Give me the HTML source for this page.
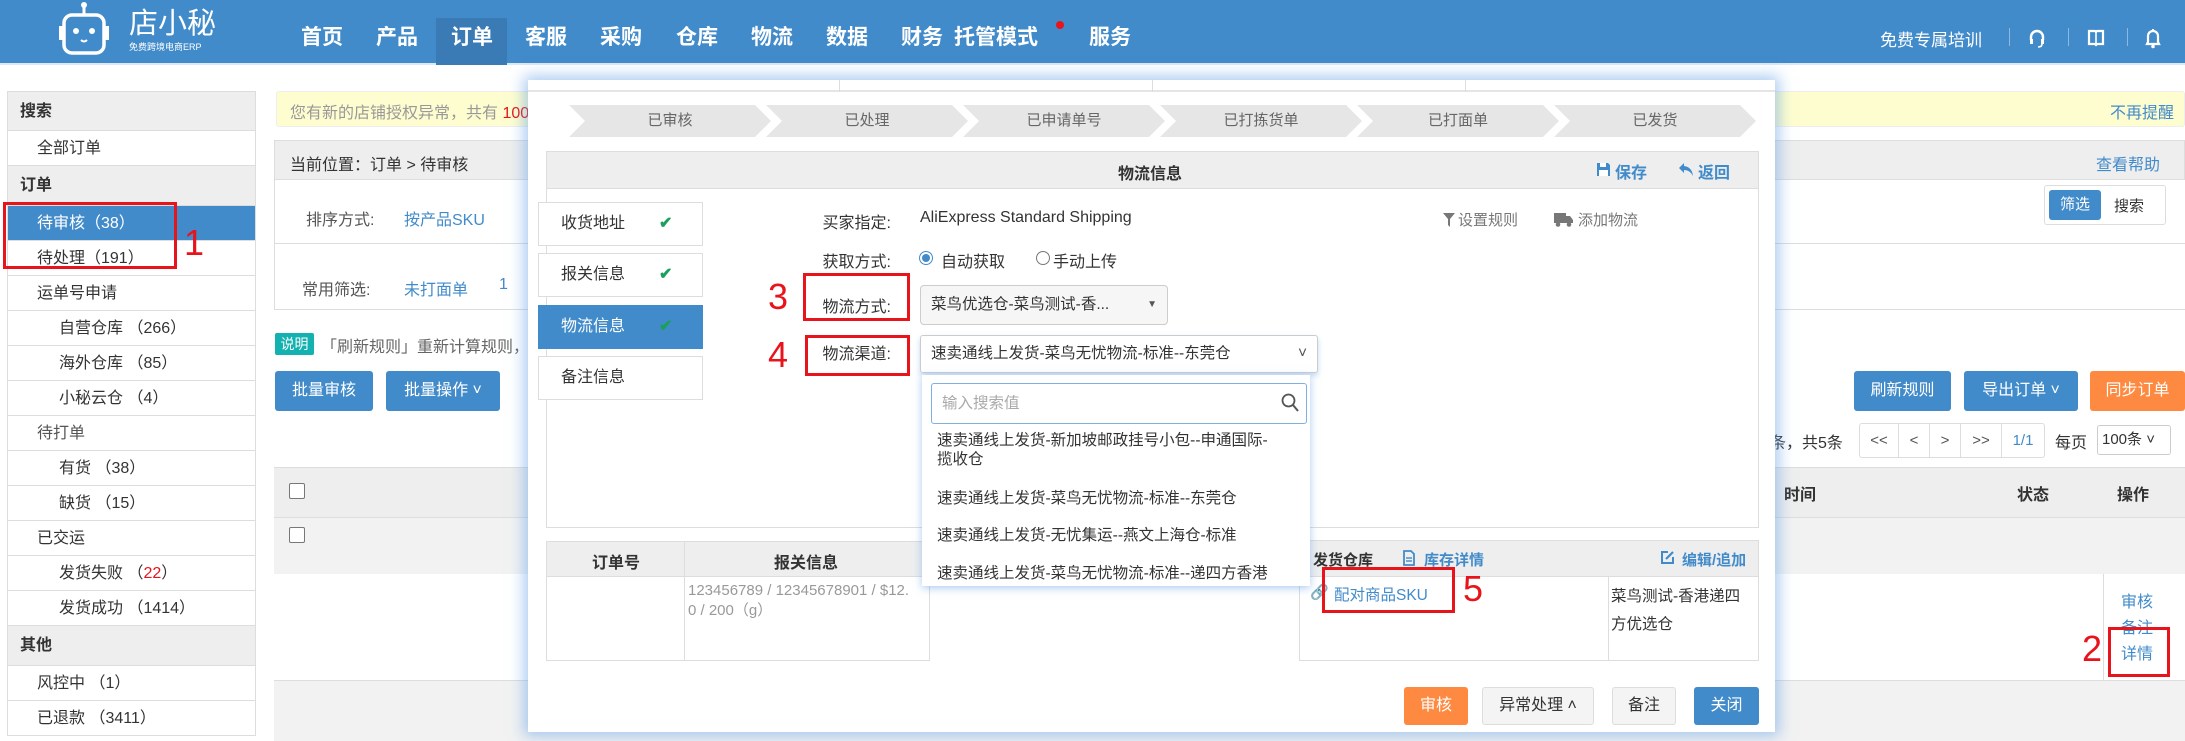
<!DOCTYPE html>
<html><head><meta charset="utf-8">
<style>
*{margin:0;padding:0;box-sizing:border-box}
body{width:2185px;height:741px;overflow:hidden;position:relative;background:#fff;font-family:"Liberation Sans","Noto Sans CJK SC",sans-serif;font-size:16px;color:#333}
.a{position:absolute}
.hdr{left:0;top:0;width:2185px;height:65px;background:#428bca;border-bottom:2px solid #dbe8f5}
.nav{top:0;height:65px;line-height:76px;color:#fff;font-weight:bold;font-size:21px}
.sb{left:7px;width:249px;border-left:1px solid #ddd;border-right:1px solid #ddd;border-bottom:1px solid #ddd;height:35px;line-height:35px;font-size:16px;color:#333;background:#fff}
.sbh{background:#eee;height:40px;line-height:40px;font-weight:bold}
.red{border:3px solid #e8141b}
.rn{color:#e8141b;font-size:36px;font-family:"Liberation Sans",sans-serif}
.btn{color:#fff;background:#428bca;border-radius:3px;text-align:center;font-size:16px}
.blue{color:#428bca}
.step{top:105px;height:32px;line-height:32px;background:#e6e6e6;color:#666;text-align:center;font-size:15px;clip-path:polygon(0 0,calc(100% - 16px) 0,100% 50%,calc(100% - 16px) 100%,0 100%,16px 50%)}
.tab{left:538px;width:165px;border:1px solid #ddd;background:#fff;height:44px;line-height:42px;padding-left:22px;font-size:16px}
.chk{color:#1aa05a;font-weight:bold;position:absolute;left:120px}
.lbl{width:110px;text-align:right;left:781px;color:#333;font-size:16px}
.gbtn{background:#f4f4f4;border:1px solid #ddd;border-radius:3px;text-align:center;line-height:36px;font-size:16px}
.dd{left:937px;font-size:15.5px;color:#333}
</style></head><body>

<!-- header -->
<div class="a hdr"></div>
<svg class="a" style="left:56px;top:2px" width="56" height="56" viewBox="0 0 56 56"><line x1="28" y1="2" x2="28" y2="12" stroke="#fff" stroke-width="3"/><circle cx="28" cy="3" r="3" fill="#fff"/><rect x="8" y="13" width="40" height="38" rx="8" fill="none" stroke="#fff" stroke-width="3.5"/><rect x="3" y="24" width="4" height="14" fill="#fff"/><rect x="49" y="24" width="4" height="14" fill="#fff"/><circle cx="20" cy="29" r="3" fill="#fff"/><circle cx="36" cy="29" r="3" fill="#fff"/><path d="M25 38 q3 3 6 0" stroke="#fff" fill="none" stroke-width="2"/></svg>
<div class="a" style="left:129px;top:8px;color:#fff;font-size:29px;line-height:32px">店小秘</div>
<div class="a" style="left:129px;top:42px;color:#fff;font-size:9px;line-height:10px">免费跨境电商ERP</div>
<div class="a" style="left:436px;top:18px;width:71px;height:47px;background:#3a7ab5"></div>
<div class="a nav" style="left:301px">首页</div>
<div class="a nav" style="left:376px">产品</div>
<div class="a nav" style="left:451px">订单</div>
<div class="a nav" style="left:525px">客服</div>
<div class="a nav" style="left:600px">采购</div>
<div class="a nav" style="left:676px">仓库</div>
<div class="a nav" style="left:751px">物流</div>
<div class="a nav" style="left:826px">数据</div>
<div class="a nav" style="left:901px">财务</div>
<div class="a nav" style="left:954px">托管模式</div>
<div class="a" style="left:1056px;top:21px;width:8px;height:8px;border-radius:50%;background:#e8141b"></div>
<div class="a nav" style="left:1089px">服务</div>
<div class="a" style="left:1880px;top:26px;color:#fff;font-size:17px">免费专属培训</div>
<div class="a" style="left:2009px;top:28px;width:1px;height:18px;background:#8db8e0"></div>
<div class="a" style="left:2068px;top:28px;width:1px;height:18px;background:#8db8e0"></div>
<div class="a" style="left:2127px;top:28px;width:1px;height:18px;background:#8db8e0"></div>
<svg class="a" style="left:2028px;top:28px" width="18" height="20" viewBox="0 0 18 20"><path d="M3 12 V9 a6 6 0 0 1 12 0 V12" fill="none" stroke="#fff" stroke-width="2.4"/><rect x="2" y="11" width="3" height="5" fill="#fff"/><rect x="13" y="11" width="3" height="5" fill="#fff"/><path d="M14 16 q0 3 -4 3" stroke="#fff" fill="none" stroke-width="1.6"/></svg>
<svg class="a" style="left:2087px;top:29px" width="18" height="18" viewBox="0 0 18 18"><path d="M2 2 H8 L9 3 L10 2 H16 V15 H10 L9 16 L8 15 H2 Z" fill="none" stroke="#fff" stroke-width="2.2"/><line x1="9" y1="3" x2="9" y2="15" stroke="#fff" stroke-width="1.6"/></svg>
<svg class="a" style="left:2145px;top:27px" width="16" height="22" viewBox="0 0 16 22"><path d="M3 15 V9 a5 5 0 0 1 10 0 V15 L14 17 H2 Z" fill="none" stroke="#fff" stroke-width="2.2"/><circle cx="8" cy="19.5" r="1.8" fill="#fff"/><rect x="7" y="2" width="2" height="3" fill="#fff"/></svg>

<!-- sidebar -->
<div class="a sb sbh" style="top:91px;padding-left:12px;border-top:1px solid #ddd">搜索</div>
<div class="a sb" style="top:131px;padding-left:29px">全部订单</div>
<div class="a sb sbh" style="top:166px;padding-left:12px">订单</div>
<div class="a sb" style="top:206px;padding-left:29px;background:#428bca;color:#fff">待审核（38）</div>
<div class="a sb" style="top:241px;padding-left:29px">待处理（191）</div>
<div class="a sb" style="top:276px;padding-left:29px">运单号申请</div>
<div class="a sb" style="top:311px;padding-left:51px">自营仓库 （266）</div>
<div class="a sb" style="top:346px;padding-left:51px">海外仓库 （85）</div>
<div class="a sb" style="top:381px;padding-left:51px">小秘云仓 （4）</div>
<div class="a sb" style="top:416px;padding-left:29px;color:#555">待打单</div>
<div class="a sb" style="top:451px;padding-left:51px">有货 （38）</div>
<div class="a sb" style="top:486px;padding-left:51px">缺货 （15）</div>
<div class="a sb" style="top:521px;padding-left:29px">已交运</div>
<div class="a sb" style="top:556px;padding-left:51px">发货失败 （<span style="color:#e8141b">22</span>）</div>
<div class="a sb" style="top:591px;padding-left:51px">发货成功 （1414）</div>
<div class="a sb sbh" style="top:626px;padding-left:12px">其他</div>
<div class="a sb" style="top:666px;padding-left:29px">风控中 （1）</div>
<div class="a sb" style="top:701px;padding-left:29px">已退款 （3411）</div>
<div class="a red" style="left:3px;top:202px;width:174px;height:67px"></div>
<div class="a rn" style="left:184px;top:222px">1</div>

<!-- main content -->
<div class="a" style="left:276px;top:91px;width:1909px;height:36px;background:#fefdd0;border:1px solid #eee;border-radius:3px"></div>
<div class="a" style="left:290px;top:99px;color:#999;font-size:16px">您有新的店铺授权异常，共有 <span style="color:#e8141b">100</span></div>
<div class="a blue" style="left:2110px;top:99px;font-size:16px">不再提醒</div>
<div class="a" style="left:274px;top:140px;width:1911px;height:40px;background:#eee;border:1px solid #ddd"></div>
<div class="a" style="left:290px;top:151px">当前位置：订单 &gt; 待审核</div>
<div class="a blue" style="left:2096px;top:151px">查看帮助</div>
<div class="a" style="left:274px;top:180px;width:1911px;height:64px;border-left:1px solid #ddd;border-bottom:1px solid #ddd"></div>
<div class="a" style="left:274px;top:244px;width:1911px;height:66px;border-left:1px solid #ddd;border-bottom:1px solid #ddd"></div>
<div class="a" style="left:306px;top:206px;color:#555">排序方式:</div>
<div class="a blue" style="left:404px;top:206px">按产品SKU</div>
<div class="a" style="left:302px;top:276px;color:#555">常用筛选:</div>
<div class="a blue" style="left:404px;top:276px">未打面单</div>
<div class="a blue" style="left:499px;top:276px">1</div>
<div class="a" style="left:2044px;top:185px;width:122px;height:40px;border:1px solid #ddd;border-radius:3px"></div>
<div class="a btn" style="left:2049px;top:190px;width:52px;height:30px;line-height:30px;font-size:15px">筛选</div>
<div class="a" style="left:2114px;top:195px;font-size:15px">搜索</div>
<div class="a" style="left:275px;top:333px;width:39px;height:22px;line-height:22px;background:#13b1b0;color:#fff;font-size:14px;text-align:center;border-radius:2px">说明</div>
<div class="a" style="left:321px;top:333px;color:#666;font-size:16px">「刷新规则」重新计算规则，</div>
<div class="a btn" style="left:275px;top:371px;width:98px;height:40px;line-height:40px">批量审核</div>
<div class="a btn" style="left:386px;top:371px;width:114px;height:40px;line-height:40px">批量操作 ˅</div>
<div class="a btn" style="left:1854px;top:371px;width:97px;height:40px;line-height:40px">刷新规则</div>
<div class="a btn" style="left:1964px;top:371px;width:114px;height:40px;line-height:40px">导出订单 ˅</div>
<div class="a btn" style="left:2090px;top:371px;width:95px;height:40px;line-height:40px;background:#fd8a40">同步订单</div>
<div class="a" style="left:1770px;top:429px">条，共5条</div>
<div class="a" style="left:1859px;top:423px;width:186px;height:35px;border:1px solid #ddd;border-radius:3px;display:flex;font-size:15px;line-height:33px;color:#555">
<div style="width:39px;text-align:center;border-right:1px solid #ddd">&lt;&lt;</div><div style="width:31px;text-align:center;border-right:1px solid #ddd">&lt;</div><div style="width:31px;text-align:center;border-right:1px solid #ddd">&gt;</div><div style="width:41px;text-align:center;border-right:1px solid #ddd">&gt;&gt;</div><div style="width:42px;text-align:center;color:#428bca">1/1</div></div>
<div class="a" style="left:2055px;top:429px">每页</div>
<div class="a" style="left:2097px;top:425px;width:74px;height:30px;border:1px solid #ccc;border-radius:3px;line-height:28px;padding-left:4px;font-size:15px">100条 ˅</div>
<div class="a" style="left:274px;top:467px;width:1911px;height:51px;background:#eee;border-top:1px solid #ddd;border-bottom:1px solid #ddd"></div>
<div class="a" style="left:289px;top:483px;width:16px;height:16px;border:1px solid #777;border-radius:2px;background:#fff"></div>
<div class="a" style="left:1784px;top:481px;font-weight:bold">时间</div>
<div class="a" style="left:2017px;top:481px;font-weight:bold">状态</div>
<div class="a" style="left:2117px;top:481px;font-weight:bold">操作</div>
<div class="a" style="left:274px;top:518px;width:1911px;height:56px;background:#f2f2f2"></div>
<div class="a" style="left:289px;top:527px;width:16px;height:16px;border:1px solid #777;border-radius:2px;background:#fff"></div>
<div class="a" style="left:274px;top:574px;width:1911px;height:107px;background:#fff;border-bottom:1px solid #ddd"></div>
<div class="a" style="left:2103px;top:574px;width:1px;height:106px;background:#ddd"></div>
<div class="a blue" style="left:2121px;top:588px;font-size:16px">审核</div>
<div class="a blue" style="left:2121px;top:614px;font-size:16px">备注</div>
<div class="a blue" style="left:2121px;top:640px;font-size:16px">详情</div>
<div class="a red" style="left:2108px;top:627px;width:62px;height:50px"></div>
<div class="a rn" style="left:2082px;top:628px">2</div>
<div class="a" style="left:274px;top:681px;width:1911px;height:60px;background:#f2f2f2"></div>

<!-- modal -->
<div class="a" style="left:528px;top:80px;width:1247px;height:652px;background:#fff;box-shadow:0 0 14px 4px rgba(100,160,230,.55)"></div>
<div class="a" style="left:528px;top:80px;width:1247px;height:12px;border-bottom:2px solid #e5e5e5"></div>
<div class="a" style="left:839px;top:80px;width:1px;height:12px;background:#ddd"></div>
<div class="a" style="left:1152px;top:80px;width:1px;height:12px;background:#ddd"></div>
<div class="a" style="left:1465px;top:80px;width:1px;height:12px;background:#ddd"></div>
<div class="a step" style="left:569px;width:202px">已审核</div>
<div class="a step" style="left:766px;width:202px">已处理</div>
<div class="a step" style="left:963px;width:202px">已申请单号</div>
<div class="a step" style="left:1160px;width:202px">已打拣货单</div>
<div class="a step" style="left:1357px;width:202px">已打面单</div>
<div class="a step" style="left:1554px;width:202px">已发货</div>

<div class="a" style="left:546px;top:151px;width:1213px;height:377px;border:1px solid #ddd"></div>
<div class="a" style="left:546px;top:151px;width:1213px;height:38px;background:#eee;border:1px solid #ddd"></div>
<div class="a" style="left:1118px;top:160px;font-weight:bold;font-size:16px">物流信息</div>
<svg class="a" style="left:1596px;top:162px" width="15" height="15" viewBox="0 0 15 15"><path d="M1 1 H12 L14 3 V14 H1 Z" fill="#428bca"/><rect x="4" y="1" width="6" height="4" fill="#fff"/><rect x="3" y="8" width="9" height="6" fill="#fff"/></svg>
<div class="a blue" style="left:1615px;top:159px;font-weight:bold">保存</div>
<svg class="a" style="left:1678px;top:162px" width="16" height="15" viewBox="0 0 16 15"><path d="M6 1 L1 6 L6 11 V8 Q12 8 15 14 Q14 5 6 4 Z" fill="#428bca"/></svg>
<div class="a blue" style="left:1698px;top:159px;font-weight:bold">返回</div>

<div class="a tab" style="top:202px">收货地址<span class="chk">✔</span></div>
<div class="a tab" style="top:253px">报关信息<span class="chk">✔</span></div>
<div class="a tab" style="top:305px;background:#428bca;color:#fff;border-color:#428bca">物流信息<span class="chk">✔</span></div>
<div class="a tab" style="top:356px">备注信息</div>

<div class="a lbl" style="top:209px">买家指定:</div>
<div class="a" style="left:920px;top:209px">AliExpress Standard Shipping</div>
<div class="a lbl" style="top:248px">获取方式:</div>
<div class="a" style="left:919px;top:251px;width:14px;height:14px;border-radius:50%;border:1px solid #428bca;background:#fff"></div>
<div class="a" style="left:922px;top:254px;width:8px;height:8px;border-radius:50%;background:#428bca"></div>
<div class="a" style="left:941px;top:248px">自动获取</div>
<div class="a" style="left:1036px;top:251px;width:14px;height:14px;border-radius:50%;border:1px solid #777"></div>
<div class="a" style="left:1053px;top:248px">手动上传</div>
<div class="a lbl" style="top:293px">物流方式:</div>
<div class="a" style="left:920px;top:285px;width:248px;height:40px;border:1px solid #ccc;border-radius:4px;background:#f6f6f6;line-height:38px;padding-left:10px;font-size:15.5px">菜鸟优选仓-菜鸟测试-香...<span style="position:absolute;right:10px;font-size:10px;color:#555">▼</span></div>
<div class="a lbl" style="top:340px">物流渠道:</div>
<div class="a" style="left:920px;top:335px;width:398px;height:38px;border:1px solid #ccc;border-radius:3px;line-height:36px;padding-left:10px;font-size:15.5px;box-shadow:0 3px 6px rgba(100,160,230,.4)">速卖通线上发货-菜鸟无忧物流-标准--东莞仓<span style="position:absolute;right:10px;color:#555">˅</span></div>
<svg class="a" style="left:1443px;top:212px" width="12" height="16" viewBox="0 0 12 16"><path d="M0 1 H12 L7 7 V15 L5 13 V7 Z" fill="#777"/></svg>
<div class="a" style="left:1458px;top:209px;color:#777;font-size:15px">设置规则</div>
<svg class="a" style="left:1554px;top:212px" width="20" height="15" viewBox="0 0 20 15"><rect x="0" y="1" width="12" height="10" fill="#777"/><path d="M12 4 H16 L19 8 V11 H12 Z" fill="#777"/><circle cx="4" cy="12.5" r="2.3" fill="#777"/><circle cx="15" cy="12.5" r="2.3" fill="#777"/></svg>
<div class="a" style="left:1578px;top:209px;color:#777;font-size:15px">添加物流</div>
<div class="a red" style="left:803px;top:273px;width:107px;height:48px"></div>
<div class="a rn" style="left:768px;top:276px">3</div>
<div class="a red" style="left:805px;top:335px;width:105px;height:41px"></div>
<div class="a rn" style="left:768px;top:334px">4</div>

<!-- bottom tables in modal -->
<div class="a" style="left:546px;top:541px;width:384px;height:120px;border:1px solid #ddd"></div>
<div class="a" style="left:546px;top:541px;width:384px;height:36px;background:#eee;border:1px solid #ddd"></div>
<div class="a" style="left:684px;top:541px;width:1px;height:120px;background:#ddd"></div>
<div class="a" style="left:592px;top:549px;font-weight:bold">订单号</div>
<div class="a" style="left:774px;top:549px;font-weight:bold">报关信息</div>
<div class="a" style="left:688px;top:581px;color:#999;font-size:15px;line-height:20px">123456789 / 12345678901 / $12.<br>0 / 200（g）</div>
<div class="a" style="left:1299px;top:540px;width:460px;height:121px;border:1px solid #ddd"></div>
<div class="a" style="left:1299px;top:540px;width:460px;height:37px;background:#eee;border:1px solid #ddd"></div>
<div class="a" style="left:1608px;top:577px;width:1px;height:84px;background:#ddd"></div>
<div class="a" style="left:1313px;top:549px;font-weight:bold;font-size:15px">发货仓库</div>
<svg class="a" style="left:1403px;top:550px" width="12" height="16" viewBox="0 0 12 16"><path d="M1 1 H8 L11 4 V15 H1 Z" fill="none" stroke="#428bca" stroke-width="1.8"/><line x1="3" y1="8" x2="9" y2="8" stroke="#428bca" stroke-width="1.4"/><line x1="3" y1="11" x2="9" y2="11" stroke="#428bca" stroke-width="1.4"/></svg>
<div class="a blue" style="left:1424px;top:549px;font-weight:bold;font-size:15px">库存详情</div>
<svg class="a" style="left:1660px;top:550px" width="15" height="15" viewBox="0 0 15 15"><path d="M8 2 H2 V13 H13 V7" fill="none" stroke="#428bca" stroke-width="2"/><path d="M6 9 L13 2" stroke="#428bca" stroke-width="2.2"/></svg>
<div class="a blue" style="left:1682px;top:549px;font-weight:bold;font-size:15px">编辑/追加</div>
<div class="a blue" style="left:1310px;top:583px;font-size:15px">🔗</div>
<div class="a blue" style="left:1334px;top:583px;font-size:15.5px">配对商品SKU</div>
<div class="a" style="left:1611px;top:583px;font-size:15.5px;line-height:28px">菜鸟测试-香港递四<br>方优选仓</div>
<div class="a red" style="left:1322px;top:567px;width:133px;height:46px"></div>
<div class="a rn" style="left:1463px;top:568px">5</div>

<!-- dropdown -->
<div class="a" style="left:922px;top:375px;width:388px;height:211px;background:#fff;box-shadow:0 2px 8px rgba(100,160,230,.55)"></div>
<div class="a" style="left:931px;top:383px;width:376px;height:41px;border:1px solid #7fb0e0;border-radius:3px;line-height:39px;padding-left:10px;color:#aaa;font-size:15.5px">输入搜索值</div>
<svg class="a" style="left:1281px;top:393px" width="18" height="20" viewBox="0 0 18 20"><circle cx="7.5" cy="7.5" r="6" fill="none" stroke="#555" stroke-width="1.8"/><line x1="12" y1="12" x2="17" y2="18" stroke="#555" stroke-width="2"/></svg>
<div class="a dd" style="top:431px;line-height:19px">速卖通线上发货-新加坡邮政挂号小包--申通国际-<br>揽收仓</div>
<div class="a dd" style="top:486px">速卖通线上发货-菜鸟无忧物流-标准--东莞仓</div>
<div class="a dd" style="top:523px">速卖通线上发货-无忧集运--燕文上海仓-标准</div>
<div class="a dd" style="top:561px">速卖通线上发货-菜鸟无忧物流-标准--递四方香港</div>

<!-- footer buttons -->
<div class="a btn" style="left:1404px;top:687px;width:64px;height:38px;line-height:38px;background:#fd8a40">审核</div>
<div class="a gbtn" style="left:1482px;top:687px;width:112px;height:38px">异常处理 ˄</div>
<div class="a gbtn" style="left:1612px;top:687px;width:64px;height:38px">备注</div>
<div class="a btn" style="left:1694px;top:687px;width:65px;height:38px;line-height:38px">关闭</div>
</body></html>
